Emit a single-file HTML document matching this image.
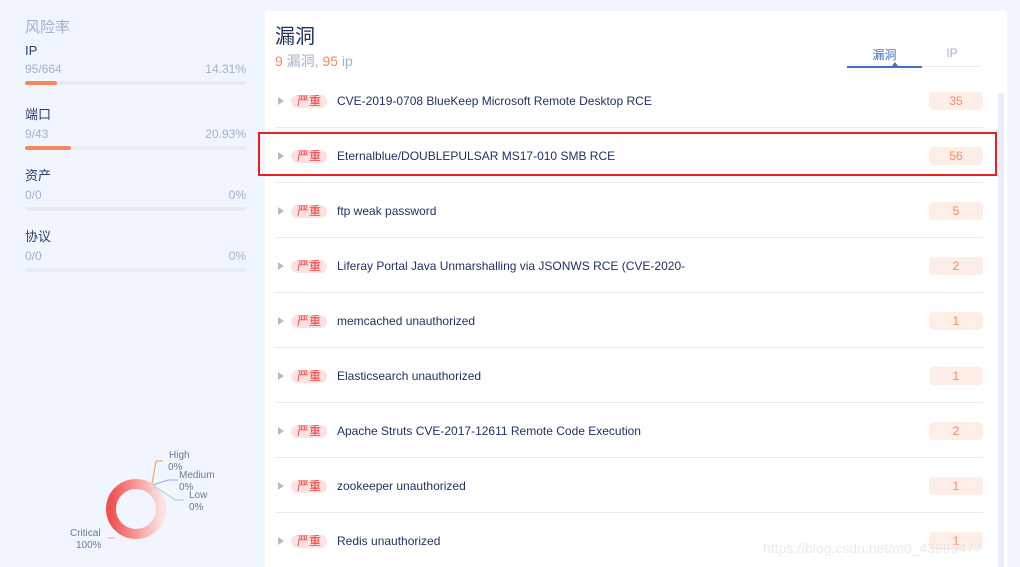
<!DOCTYPE html>
<html><head><meta charset="utf-8"><style>
*{margin:0;padding:0;box-sizing:border-box}
html,body{width:1020px;height:567px;overflow:hidden}
body{background:#f0f5fe;font-family:"Liberation Sans","Noto Sans CJK SC",sans-serif;position:relative}
.l{position:absolute;left:25px;width:221px}
.t{font-size:13px;color:#2a3f6b}
.s{font-size:12px;color:#a3b1cc;display:flex;justify-content:space-between;margin-top:4px}
.bar{height:4px;background:#e6ecf6;border-radius:2px;margin-top:5px}
.bar i{display:block;height:4px;background:#f58a62;border-radius:2px}
#p{position:absolute;left:265px;top:11px;width:742px;height:556px;background:#fff;overflow:hidden}
.row{position:absolute;left:10px;width:708px;height:55px;border-bottom:1px solid #e6ebf5}
.row .a{position:absolute;left:3px;top:24px;width:0;height:0;border-left:6px solid #b3bccd;border-top:4px solid transparent;border-bottom:4px solid transparent}
.row .tag{position:absolute;left:16px;top:22px;width:36px;height:13px;background:#fde2e2;border-radius:7px;color:#f04040;font-size:12px;line-height:13px;text-align:center}
.row .n{position:absolute;left:62px;top:21px;font-size:12px;color:#1f3260}
.row .c{position:absolute;right:0;top:19px;width:54px;height:18px;background:#fdeee8;border-radius:4px;color:#f58a62;font-size:12px;line-height:18px;text-align:center}
</style></head><body>
<div class="l" style="top:16px;font-size:15px;color:#a3b1cc">风险率</div>
<div class="l" style="top:43px"><div class="t">IP</div><div class="s"><span>95/664</span><span>14.31%</span></div><div class="bar"><i style="width:32px"></i></div></div>
<div class="l" style="top:104px"><div class="t">端口</div><div class="s"><span>9/43</span><span>20.93%</span></div><div class="bar"><i style="width:46px"></i></div></div>
<div class="l" style="top:165px"><div class="t">资产</div><div class="s"><span>0/0</span><span>0%</span></div><div class="bar"></div></div>
<div class="l" style="top:226px"><div class="t">协议</div><div class="s"><span>0/0</span><span>0%</span></div><div class="bar"></div></div>
<svg style="position:absolute;left:60px;top:440px" width="200" height="127">
<defs><linearGradient id="g"><stop offset="0" stop-color="#ee5350"/><stop offset="1" stop-color="#fde0e0"/></linearGradient></defs>
<circle cx="76" cy="69" r="25" fill="none" stroke="url(#g)" stroke-width="10"/>
<polyline points="92,44 96,21 103,21" fill="none" stroke="#f5a050"/>
<polyline points="93,45 108,40 118,40" fill="none" stroke="#8fb0e8"/>
<polyline points="94,46 115,60 124,60" fill="none" stroke="#8ee0b0"/>
<polyline points="48,98 55,98" fill="none" stroke="#f5a0a0"/>
<g font-size="10" fill="#6b7a99" font-family="Liberation Sans">
<text x="109" y="18">High</text><text x="108" y="30">0%</text>
<text x="119" y="38">Medium</text><text x="119" y="50">0%</text>
<text x="129" y="58">Low</text><text x="129" y="70">0%</text>
<text x="10" y="96">Critical</text><text x="16" y="108">100%</text></g></svg>
<div id="p">
<div style="position:absolute;left:10px;top:9px;font-size:20px;color:#1f3260">漏洞</div>
<div style="position:absolute;left:10px;top:40px;font-size:14px;color:#a3b1cc"><span style="color:#f58a62">9</span> 漏洞, <span style="color:#f58a62">95</span> ip</div>
<div style="position:absolute;left:582px;top:35px;font-size:12px;color:#3d72c8;width:75px;text-align:center">漏洞</div>
<div style="position:absolute;left:657px;top:35px;font-size:12px;color:#a3b1cc;width:60px;text-align:center">IP</div>
<div style="position:absolute;left:582px;top:55px;width:75px;height:2px;background:#3d72c8"></div>
<div style="position:absolute;left:657px;top:55px;width:58px;height:1px;background:#e6ebf5"></div>
<div style="position:absolute;left:627px;top:51px;border-left:3px solid transparent;border-right:3px solid transparent;border-bottom:4px solid #3d72c8"></div>
<div style="position:absolute;left:733px;top:82px;width:6px;height:474px;background:#e8edf7"></div>
<div class="row" style="top:62px"><i class="a"></i><span class="tag">严重</span><span class="n">CVE-2019-0708 BlueKeep Microsoft Remote Desktop RCE</span><span class="c">35</span></div>
<div class="row" style="top:117px"><i class="a"></i><span class="tag">严重</span><span class="n">Eternalblue/DOUBLEPULSAR MS17-010 SMB RCE</span><span class="c">56</span></div>
<div class="row" style="top:172px"><i class="a"></i><span class="tag">严重</span><span class="n">ftp weak password</span><span class="c">5</span></div>
<div class="row" style="top:227px"><i class="a"></i><span class="tag">严重</span><span class="n">Liferay Portal Java Unmarshalling via JSONWS RCE (CVE-2020-</span><span class="c">2</span></div>
<div class="row" style="top:282px"><i class="a"></i><span class="tag">严重</span><span class="n">memcached unauthorized</span><span class="c">1</span></div>
<div class="row" style="top:337px"><i class="a"></i><span class="tag">严重</span><span class="n">Elasticsearch unauthorized</span><span class="c">1</span></div>
<div class="row" style="top:392px"><i class="a"></i><span class="tag">严重</span><span class="n">Apache Struts CVE-2017-12611 Remote Code Execution</span><span class="c">2</span></div>
<div class="row" style="top:447px"><i class="a"></i><span class="tag">严重</span><span class="n">zookeeper unauthorized</span><span class="c">1</span></div>
<div class="row" style="top:502px;border:0"><i class="a"></i><span class="tag">严重</span><span class="n">Redis unauthorized</span><span class="c">1</span></div>
</div>
<div style="position:absolute;left:258px;top:132px;width:739px;height:44px;border:2px solid #e82020"></div>
<div style="position:absolute;left:763px;top:540px;font-size:14px;color:rgba(225,225,225,.7)">https://blog.csdn.net/m0_43999477</div>
</body></html>
